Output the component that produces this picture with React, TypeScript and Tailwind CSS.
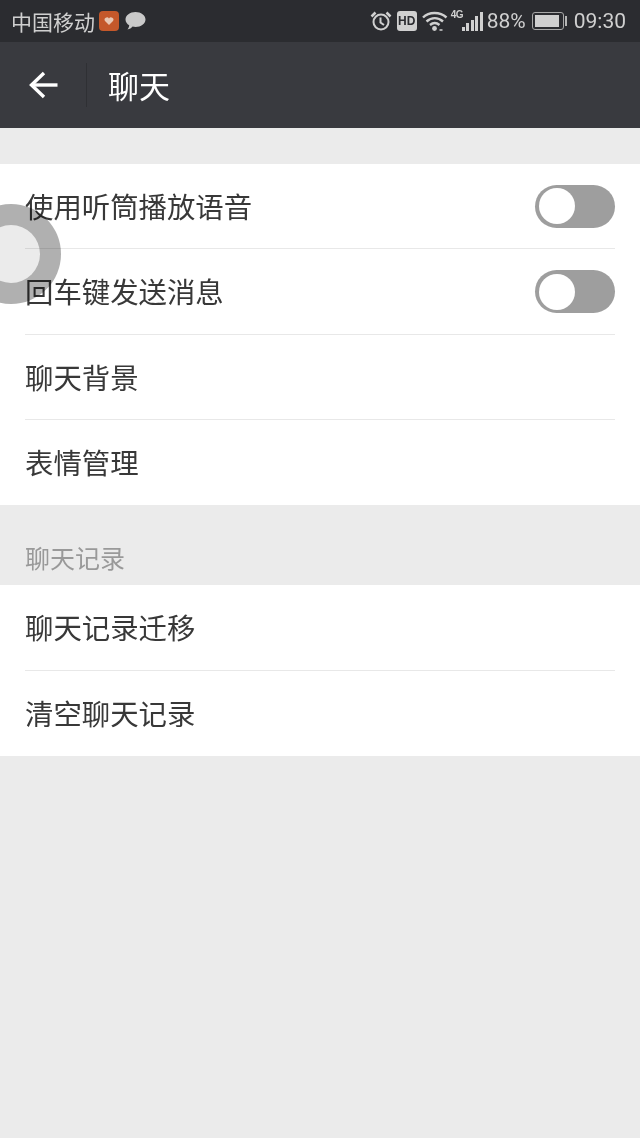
const cjk = "font-['Noto_Sans_CJK_SC',sans-serif]";

function Toggle() {
  return (
    <div className="flex h-[43px] w-[80px] items-center rounded-full bg-[#9e9e9e] p-[4px]">
      <div className="h-[36px] w-[36px] rounded-full bg-white" />
    </div>
  );
}

function Row({ label, toggle, last }: { label: string; toggle?: boolean; last?: boolean }) {
  return (
    <div className="px-[25px]">
      <div
        className={
          last
            ? 'flex h-[85px] items-center justify-between'
            : 'flex h-[85.4px] items-center justify-between border-b border-[#e8e8e8]'
        }
      >
        <span className="text-[28.4px] leading-none text-[#383838]">{label}</span>
        {toggle && <Toggle />}
      </div>
    </div>
  );
}

function BackArrow() {
  return (
    <svg width="29" height="28" viewBox="0 0 29 28" fill="none" stroke="#ffffff" strokeWidth="3.400">
      <path d="M28.500 14H3" />
      <path d="M15 2 2.500 14 15 26" />
    </svg>
  );
}

function AlarmIcon() {
  return (
    <svg width="22" height="22" viewBox="0 0 22 22" fill="none" stroke="#d0d0d0" strokeWidth="2">
      <circle cx="11" cy="12" r="7.500" />
      <path d="M10.500 7.500V12.500l3.500 2.500" />
      <path d="M1.500 6.500 5.500 2.500M20.500 6.500 16.500 2.500" strokeWidth="2.500" />
    </svg>
  );
}

function WifiIcon() {
  return (
    <svg width="26" height="22" viewBox="0 0 26 22" fill="none" stroke="#d0d0d0" strokeWidth="2.400">
      <path d="M1 7.500C7 1.500 18 1.500 24.500 7.500" />
      <path d="M4.500 11.500c5-4.500 11.500-4.500 16.500 0" />
      <path d="M8 15c3-2.500 6.500-2.500 9.500 0" />
      <circle cx="12.500" cy="18.500" r="2.400" fill="#d0d0d0" stroke="none" />
      <path d="M17.500 20h3" strokeWidth="1.500" />
    </svg>
  );
}

function SignalIcon() {
  return (
    <div className="relative h-[24px] w-[25px]">
      <span className="absolute left-[-11px] top-[1px] font-['Liberation_Sans',sans-serif] text-[10px] font-bold leading-none tracking-[-0.5px] text-[#d0d0d0]">
        4G
      </span>
      <div className="absolute bottom-[2px] left-0 flex items-end gap-[1.500px]">
        <div className="h-[4px] w-[3px] bg-[#d0d0d0]" />
        <div className="h-[8px] w-[3px] bg-[#d0d0d0]" />
        <div className="h-[11px] w-[3px] bg-[#d0d0d0]" />
        <div className="h-[15px] w-[3px] bg-[#d0d0d0]" />
        <div className="h-[19px] w-[3px] bg-[#d0d0d0]" />
      </div>
    </div>
  );
}

function StatusBar() {
  return (
    <div className="flex h-[42px] items-center justify-between bg-[#2b2c30] pl-[11px] pr-[14px] text-[#d0d0d0]">
      <div className="flex items-center">
        <span className="text-[21px] leading-none">中国移动</span>
        <div className="ml-[4px] flex h-[20px] w-[20px] items-center justify-center rounded-[4px] bg-[#c4582a]">
          <svg width="10" height="10" viewBox="0 0 10 10" fill="#e8c8b4">
            <path d="M5 9 1 5a2.300 2.300 0 0 1 4-2.600A2.300 2.300 0 0 1 9 5Z" />
          </svg>
        </div>
        <svg className="ml-[6px]" width="21" height="20" viewBox="0 0 21 20" fill="#c9c9c9">
          <path d="M10.500 1C16 1 20.500 4.400 20.500 8.500S16 16 10.500 16c-1 0-2-.1-2.900-.4C6.500 17 4.500 18.300 2.500 18.500c1-1 1.600-2.500 1.700-4.200C2 13 .5 10.900.5 8.500.5 4.400 5 1 10.500 1Z" />
        </svg>
      </div>
      <div className="flex items-center">
        <AlarmIcon />
        <div className="ml-[5px] flex h-[20px] w-[20px] items-center justify-center rounded-[3px] bg-[#d0d0d0] font-['Liberation_Sans',sans-serif] text-[12px] font-bold leading-none text-[#2b2c30]">
          HD
        </div>
        <div className="ml-[5px]">
          <WifiIcon />
        </div>
        <div className="ml-[14px]">
          <SignalIcon />
        </div>
        <span className="font-['Roboto',sans-serif] text-[21px] leading-none">88%</span>
        <div className="ml-[6px] flex items-center">
          <div className="h-[18px] w-[32px] rounded-[3px] border border-[#a8a8a8] p-[2px]">
            <div className="h-full w-[92%] bg-[#d0d0d0]" />
          </div>
          <div className="ml-[1px] h-[10px] w-[2px] bg-[#b5b5b5]" />
        </div>
        <span className="ml-[7px] font-['Roboto',sans-serif] text-[21px] leading-none">09:30</span>
      </div>
    </div>
  );
}

export default function App() {
  return (
    <div className={`relative flex h-[1138px] w-[640px] flex-col overflow-hidden bg-[#ebebeb] ${cjk}`}>
      <StatusBar />

      <div className="flex h-[86px] items-center bg-[#393a3f]">
        <div className="flex w-[86px] justify-center">
          <BackArrow />
        </div>
        <div className="h-[44px] w-px bg-[#2f3034]" />
        <span className="mb-[2px] ml-[21px] text-[31px] leading-none text-white">聊天</span>
      </div>

      <div className="mt-[36px] bg-white">
        <Row label="使用听筒播放语音" toggle />
        <Row label="回车键发送消息" toggle />
        <Row label="聊天背景" />
        <Row label="表情管理" last />
      </div>

      <div className="flex h-[80px] items-end pb-[15px] pl-[25px] text-[25px] leading-none text-[#999999]">
        聊天记录
      </div>

      <div className="bg-white">
        <Row label="聊天记录迁移" />
        <Row label="清空聊天记录" last />
      </div>

      {/* floating ball, text shows through it */}
      <div className="absolute left-[-39px] top-[204px] flex h-[100px] w-[100px] items-center justify-center rounded-full bg-[#b0b0b0] mix-blend-multiply">
        <div className="h-[58px] w-[58px] rounded-full bg-[#ebebeb]" />
      </div>
    </div>
  );
}
